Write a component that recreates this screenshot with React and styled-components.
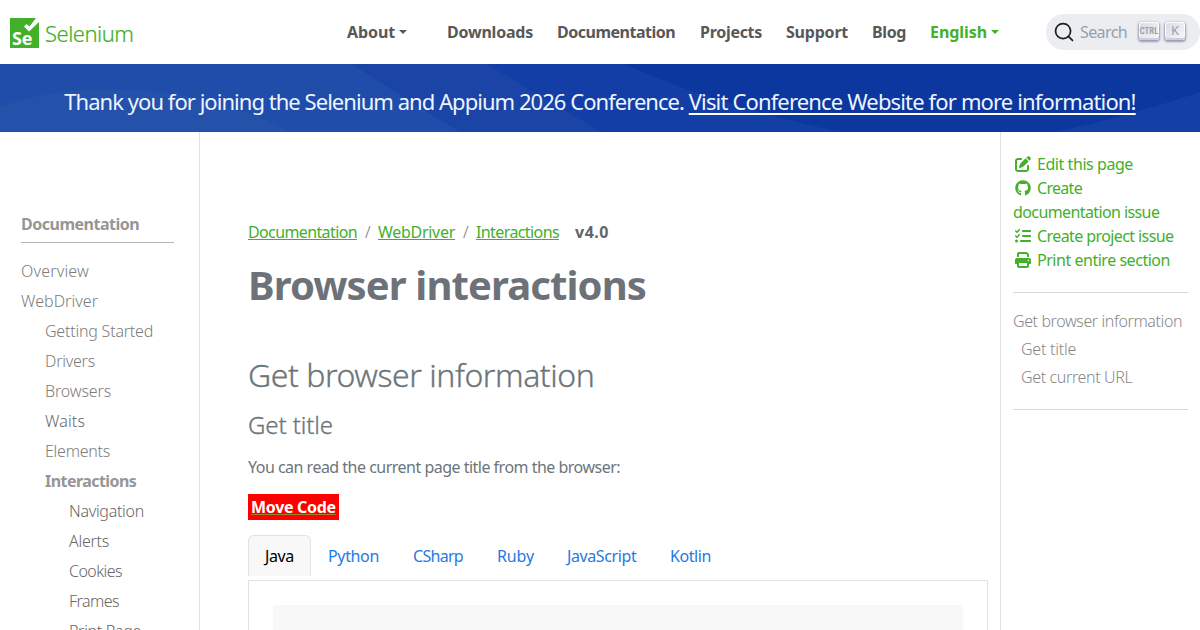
import React from "react";
import styled, { createGlobalStyle } from "styled-components";
import { FaGithub, FaListCheck, FaPenToSquare, FaPrint } from "react-icons/fa6";

const GlobalStyle = createGlobalStyle`
  * {
    box-sizing: border-box;
  }

  body {
    margin: 0;
    height: 630px;
    overflow: hidden;
    background: #fff;
    color: #6c757d;
    font-family: "Noto Sans", "Open Sans", sans-serif;
    font-size: 16px;
    line-height: 24px;
  }

  a {
    color: inherit;
    text-decoration: none;
  }
`;

const Text = styled.span`
  letter-spacing: ${(p) => p.$ls || 0}px;
  white-space: nowrap;
`;

const Page = styled.div`
  width: 1200px;
  height: 630px;
  overflow: hidden;
  display: flex;
  flex-direction: column;
`;

const Navbar = styled.nav`
  height: 64px;
  flex: none;
  display: flex;
  align-items: center;
  padding-left: 10px;
`;

const Brand = styled.a`
  display: flex;
  align-items: center;
  width: 337px;
  padding-top: 2px;
  color: #43b02a;

  svg {
    display: block;
    margin-right: 5px;
  }
`;

const LogoMark = styled.span`
  position: relative;
  display: block;
`;

const LogoLetters = styled.span`
  position: absolute;
  left: 2px;
  bottom: 2px;
  color: #fff;
  font: 700 18px/15px "Open Sans", sans-serif;
  letter-spacing: -0.2px;
`;

const Wordmark = styled(Text)`
  font-size: 22px;
  font-weight: 300;
  line-height: 30px;
  -webkit-text-stroke: 0.2px #43b02a;
`;

const NavLink = styled.a`
  display: flex;
  align-items: center;
  flex: none;
  width: ${(p) => p.$w}px;
  margin-right: ${(p) => p.$gap || 24}px;
  font-weight: 700;
  color: ${(p) => (p.$active ? "#43b02a" : "#585858")};
`;

const Caret = styled.span`
  margin: 0 0 0 4px;
  border-top: 4px solid;
  border-right: 4px solid transparent;
  border-left: 4px solid transparent;
`;

const SearchButton = styled.button`
  display: flex;
  align-items: center;
  flex: none;
  width: 154px;
  height: 36px;
  padding: 0 12px 0 8px;
  border: 0;
  border-radius: 40px;
  background: #ebedf0;
  color: #969faf;
  font: inherit;

  svg {
    flex: none;
    color: #1c1e21;
  }
`;

const SearchLabel = styled(Text)`
  width: 48px;
  flex: none;
  margin: 0 11px 0 6px;
  text-align: left;
`;

const Key = styled.kbd`
  display: flex;
  justify-content: center;
  width: 20px;
  height: 18px;
  margin: -2px 6px 0 0;
  flex: none;
  padding-bottom: 2px;
  border-radius: 3px;
  background: linear-gradient(-225deg, #d5dbe4, #f8f8f8);
  box-shadow: inset 0 -2px 0 0 #cdcde6, inset 0 0 1px 1px #fff,
    0 1px 2px 1px rgba(30, 35, 90, 0.4);
  font-family: ${(p) => (p.$narrow ? "Roboto" : '"Noto Sans"')}, sans-serif;
  font-stretch: ${(p) => (p.$narrow ? "75%" : "100%")};
  font-weight: ${(p) => (p.$narrow ? 600 : 400)};
  font-size: ${(p) => (p.$narrow ? 9 : 13)}px;
  line-height: ${(p) => (p.$narrow ? 18 : 16)}px;
`;

const Banner = styled.section`
  position: relative;
  flex: none;
  height: 68px;
  padding-top: 4px;
  overflow: hidden;
  background: #0b379f;
  color: #eef4ff;
  text-align: center;
  font-size: 22px;
  line-height: 66px;
  white-space: pre;

  svg {
    position: absolute;
    inset: 0;
  }

  a {
    text-decoration: underline;
    text-decoration-color: #fff;
    text-decoration-thickness: 2px;
    text-underline-offset: 3px;
  }
`;

const BannerText = styled(Text)`
  position: relative;
  white-space: pre;
`;

const Columns = styled.div`
  flex: 1;
  min-height: 0;
  display: grid;
  grid-template-columns: 200px 800px 200px;
`;

const Sidebar = styled.aside`
  padding: 77px 25px 0 21px;
  border-right: 1px solid #dee2e6;
  color: #888;
`;

const SidebarTitle = styled.a`
  display: block;
  height: 34px;
  padding-top: 3px;
  margin-bottom: 13px;
  border-bottom: 1px solid #b5b5b5;
  font-weight: 700;
  color: #969696;
`;

const SidebarLink = styled.a`
  display: block;
  height: 30px;
  padding-left: ${(p) => p.$level * 24}px;
  line-height: 30px;
  font-weight: ${(p) => (p.$active ? 700 : 300)};
  color: ${(p) => (p.$active ? "#969696" : p.$dark ? "#666" : "#7c7c7c")};
`;

const Main = styled.main`
  padding: 88px 12px 0 48px;
  color: #6c757a;
`;

const Breadcrumb = styled.div`
  display: flex;
  color: #43b02a;

  a {
    flex: none;
    text-decoration: underline;
  }

  b {
    margin-left: 16px;
    color: #62666a;
  }
`;

const Crumb = styled.a`
  width: ${(p) => p.$w}px;
`;

const Slash = styled.span`
  width: 21px;
  padding-left: 8px;
  font-weight: 300;
  color: #6c757d;
`;

const H1 = styled.h1`
  margin: 17px 0 0;
  font-size: 40px;
  font-weight: 700;
  line-height: 48px;
  color: #6c7278;
`;

const H2 = styled.h2`
  margin: 47px 0 0;
  font-size: 32px;
  font-weight: 300;
  line-height: 38px;
  -webkit-text-stroke: 0.3px #6c757a;
`;

const H3 = styled.h3`
  margin: 16px 0 0;
  font-size: 24px;
  font-weight: 300;
  line-height: 29px;
  -webkit-text-stroke: 0.3px #6c757a;
`;

const Paragraph = styled.p`
  margin: 16px 0 15px;
`;

const MoveCode = styled.span`
  display: block;
  width: 91px;
  height: 26px;
  padding: 1px 3px;
  background: #f00;
  color: #fff;
  font-weight: 700;

  a {
    text-decoration: underline;
    text-decoration-color: #a08020;
  }
`;

const Tabs = styled.div`
  display: flex;
  height: 41px;
  margin-top: 15px;
  color: #1f7ae4;
`;

const Tab = styled.a`
  width: ${(p) => p.$w + 34}px;
  height: 41px;
  padding: 8px 0 0 16px;
  border: 1px solid ${(p) => (p.$active ? "#dee2e6" : "transparent")};
  border-bottom: 0;
  border-radius: 6px 6px 0 0;
  background: ${(p) => (p.$active ? "#f8f8f8" : "none")};
  color: ${(p) => (p.$active ? "#000" : "inherit")};
`;

const TabPane = styled.div`
  margin-top: 4px;
  height: 80px;
  padding: 24px;
  border: 1px solid #dee2e6;
`;

const CodeBlock = styled.div`
  height: 60px;
  background: #f8f8f8;
`;

const Toc = styled.aside`
  padding: 20px 12px 0 12px;
  border-left: 1px solid #dee2e6;
`;

const PageMeta = styled.div`
  height: 141px;
  border-bottom: 1px solid #d6d8da;
  color: #43b02a;

  a {
    display: block;
  }

  svg {
    width: 20px;
    margin-right: 4px;
    vertical-align: -2px;
  }
`;

const TocList = styled.div`
  height: 117px;
  padding-top: 14px;
  border-bottom: 1px solid #d6d8da;
  font-weight: 300;
  line-height: 28px;
  color: #888;
`;

const TocLink = styled.a`
  display: block;
  padding-left: ${(p) => (p.$nested ? 8 : 0)}px;
`;

const navItems = [
  { label: "About", w: 60, gap: 40, ls: -0.1, caret: true },
  { label: "Downloads", w: 86, ls: -0.22 },
  { label: "Documentation", w: 119, ls: -0.49 },
  { label: "Projects", w: 62, ls: -0.29 },
  { label: "Support", w: 62, ls: -0.21 },
  { label: "Blog", w: 34, ls: -0.37 },
  { label: "English", w: 69, gap: 47, ls: -0.07, caret: true, active: true },
];

const sidebarItems = [
  { label: "Overview", level: 0, ls: 0.19 },
  { label: "WebDriver", level: 0, ls: 0.05 },
  { label: "Getting Started", level: 1, ls: -0.21 },
  { label: "Drivers", level: 1, ls: -0.23 },
  { label: "Browsers", level: 1, ls: -0.14 },
  { label: "Waits", level: 1, ls: 0.14, dark: true },
  { label: "Elements", level: 1, ls: -0.25 },
  { label: "Interactions", level: 1, ls: -0.55, active: true },
  { label: "Navigation", level: 2, ls: -0.28, dark: true },
  { label: "Alerts", level: 2, ls: -0.25, dark: true },
  { label: "Cookies", level: 2, ls: -0.54, dark: true },
  { label: "Frames", level: 2, ls: -0.55, dark: true },
  { label: "Print Page", level: 2, ls: -0.3, dark: true },
];

const languages = [
  { label: "Java", w: 29, ls: -0.37 },
  { label: "Python", w: 51, ls: -0.35 },
  { label: "CSharp", w: 50, ls: -0.7 },
  { label: "Ruby", w: 36, ls: -0.12 },
  { label: "JavaScript", w: 69, ls: -0.4 },
  { label: "Kotlin", w: 41, ls: -0.42 },
];

const Logo = () => (
  <LogoMark>
    <svg width="30" height="30" viewBox="0 0 30 30">
      <path d="M0 0h26L19.500 8.500 16.500 6 14 8.500l5 5L29 4v26H0z" fill="#43b02a" />
    </svg>
    <LogoLetters>Se</LogoLetters>
  </LogoMark>
);

const BannerWaves = () => (
  <svg width="1200" height="68" viewBox="0 0 1200 68">
    <path d="M0 0H625Q700 36 840 68H0z" fill="#133ea6" />
    <path d="M0 0H487Q542 34 602 68H0z" fill="#1b44a7" />
    <path d="M0 0H352Q402 33 460 68H0z" fill="#204da9" />
    <path d="M0 43Q48 25 110 25Q210 26 290 68H0z" fill="#2451aa" />
    <path d="M1055 68Q1130 52 1200 28V68z" fill="#143fa5" />
  </svg>
);

const App = () => (
  <Page>
    <GlobalStyle />
    <Navbar>
      <Brand href="#">
        <Logo />
        <Wordmark $ls={-0.5}>Selenium</Wordmark>
      </Brand>
      {navItems.map((item) => (
        <NavLink key={item.label} href="#" $w={item.w} $gap={item.gap} $active={item.active}>
          <Text $ls={item.ls}>{item.label}</Text>
          {item.caret && <Caret />}
        </NavLink>
      ))}
      <SearchButton>
        <svg width="20" height="20" viewBox="0 0 20 20">
          <path
            d="M14.386 14.386l4.088 4.088-4.088-4.088c-2.942 2.942-7.711 2.942-10.653 0s-2.942-7.711 0-10.653 7.711-2.942 10.653 0 2.942 7.711 0 10.653z"
            stroke="currentColor"
            strokeWidth="1.7"
            fill="none"
            strokeLinecap="round"
            strokeLinejoin="round"
          />
        </svg>
        <SearchLabel $ls={-0.6}>Search</SearchLabel>
        <Key $narrow>CTRL</Key>
        <Key>K</Key>
      </SearchButton>
    </Navbar>

    <Banner>
      <BannerWaves />
      <BannerText $ls={-0.96}>
        Thank you for joining the Selenium and Appium 2026 Conference.{" "}
        <a href="#">
          <Text $ls={-0.85}>Visit Conference Website for more information!</Text>
        </a>
      </BannerText>
    </Banner>

    <Columns>
      <Sidebar>
        <SidebarTitle href="#">
          <Text $ls={-0.49}>Documentation</Text>
        </SidebarTitle>
        {sidebarItems.map((item) => (
          <SidebarLink
            key={item.label}
            href="#"
            $level={item.level}
            $active={item.active}
            $dark={item.dark}
          >
            <Text $ls={item.ls}>{item.label}</Text>
          </SidebarLink>
        ))}
      </Sidebar>

      <Main>
        <Breadcrumb>
          <Crumb href="#" $w={109}>
            <Text $ls={-0.62}>Documentation</Text>
          </Crumb>
          <Slash>/</Slash>
          <Crumb href="#" $w={77}>
            <Text $ls={-0.29}>WebDriver</Text>
          </Crumb>
          <Slash>/</Slash>
          <Crumb href="#" $w={83}>
            <Text $ls={-0.6}>Interactions</Text>
          </Crumb>
          <b>
            <Text $ls={0.52}>v4.0</Text>
          </b>
        </Breadcrumb>
        <H1>
          <Text $ls={-0.88}>Browser interactions</Text>
        </H1>
        <H2>
          <Text $ls={-0.44}>Get browser information</Text>
        </H2>
        <H3>
          <Text $ls={-0.09}>Get title</Text>
        </H3>
        <Paragraph>
          <Text $ls={-0.51}>You can read the current page title from the browser:</Text>
        </Paragraph>
        <MoveCode>
          <a href="#">
            <Text $ls={-0.32}>Move Code</Text>
          </a>
        </MoveCode>
        <Tabs>
          {languages.map((lang, i) => (
            <Tab key={lang.label} href="#" $w={lang.w} $active={i === 0}>
              <Text $ls={lang.ls}>{lang.label}</Text>
            </Tab>
          ))}
        </Tabs>
        <TabPane>
          <CodeBlock />
        </TabPane>
      </Main>

      <Toc>
        <PageMeta>
          <a href="#">
            <FaPenToSquare />
            <Text $ls={-0.44}>Edit this page</Text>
          </a>
          <a href="#">
            <FaGithub />
            <Text $ls={-0.7}>Create</Text>
            <br />
            <Text $ls={-0.6}>documentation issue</Text>
          </a>
          <a href="#">
            <FaListCheck />
            <Text $ls={-0.59}>Create project issue</Text>
          </a>
          <a href="#">
            <FaPrint />
            <Text $ls={-0.47}>Print entire section</Text>
          </a>
        </PageMeta>
        <TocList>
          <TocLink href="#">
            <Text $ls={-0.4}>Get browser information</Text>
          </TocLink>
          <TocLink href="#" $nested>
            <Text $ls={-0.24}>Get title</Text>
          </TocLink>
          <TocLink href="#" $nested>
            <Text $ls={-0.36}>Get current URL</Text>
          </TocLink>
        </TocList>
      </Toc>
    </Columns>
  </Page>
);

export default App;
